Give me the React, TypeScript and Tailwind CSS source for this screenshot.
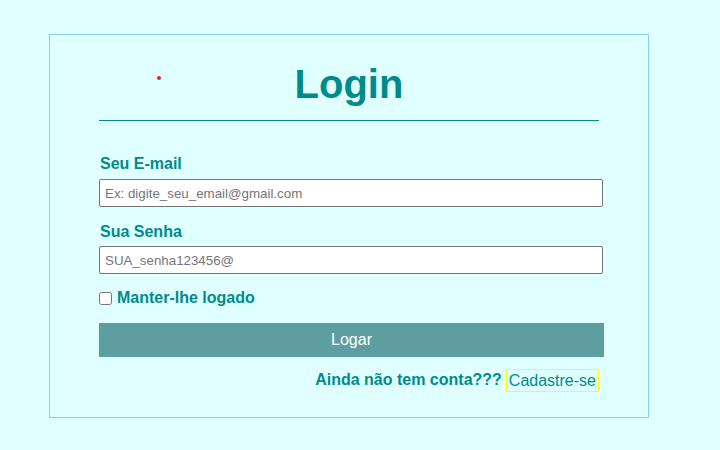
import { useState } from 'react';

function App() {
  const [email, setEmail] = useState('');
  const [senha, setSenha] = useState('');
  const [manter, setManter] = useState(false);

  return (
    <div className="min-h-screen bg-[#e0ffff] pt-[34px] pl-[49px] font-['Liberation_Sans',Arial,sans-serif]">
      <div className="w-[600px] h-[384px] border border-[#87ceeb] px-[49px]">
        <div className="relative pt-[26px]">
          <span className="absolute left-[58px] top-[41px] w-[4px] h-[4px] rounded-full bg-[#ee1c24]" />
          <h1 className="text-[40px] leading-[46px] font-bold text-center text-[#008b8b]">Login</h1>
          <div className="mt-[13px] h-px w-[500px] bg-[#008b8b]" />
        </div>

        <form onSubmit={(e) => e.preventDefault()}>
          <label className="block mt-[33px] pl-px text-[16px] leading-[20px] font-bold text-[#008b8b]">
            Seu E-mail
          </label>
          <input
            type="email"
            value={email}
            onChange={(e) => setEmail(e.target.value)}
            placeholder="Ex: digite_seu_email@gmail.com"
            className="block mt-[5px] w-[504px] h-[28px] border border-[#767676] rounded-[2px] bg-white px-[5px] text-[13.33px] text-black placeholder:text-[#757575] outline-none"
          />

          <label className="block mt-[15px] pl-px text-[16px] leading-[20px] font-bold text-[#008b8b]">
            Sua Senha
          </label>
          <input
            type="password"
            value={senha}
            onChange={(e) => setSenha(e.target.value)}
            placeholder="SUA_senha123456@"
            className="block mt-[4px] w-[504px] h-[28px] border border-[#767676] rounded-[2px] bg-white px-[5px] text-[13.33px] text-black placeholder:text-[#757575] outline-none"
          />

          <label className="flex items-center mt-[14px] h-[20px] text-[16px] leading-[20px] font-bold text-[#008b8b]">
            <input
              type="checkbox"
              checked={manter}
              onChange={(e) => setManter(e.target.checked)}
              className="m-0 mr-[5px] w-[13px] h-[13px]"
            />
            Manter-lhe logado
          </label>

          <button
            type="submit"
            className="block mt-[15px] w-[505px] h-[34px] bg-[#5f9ea0] text-white text-[16px]"
          >
            Logar
          </button>

          <div className="flex justify-end items-center gap-[4px] mt-[11px]">
            <span className="text-[16px] font-bold text-[#008b8b]">Ainda não tem conta???</span>
            <a href="#" className="border border-[#ffff00] px-[2px] text-[16px] leading-[21px] text-[#008b8b]">
              Cadastre-se
            </a>
          </div>
        </form>
      </div>
    </div>
  );
}

export default App;
